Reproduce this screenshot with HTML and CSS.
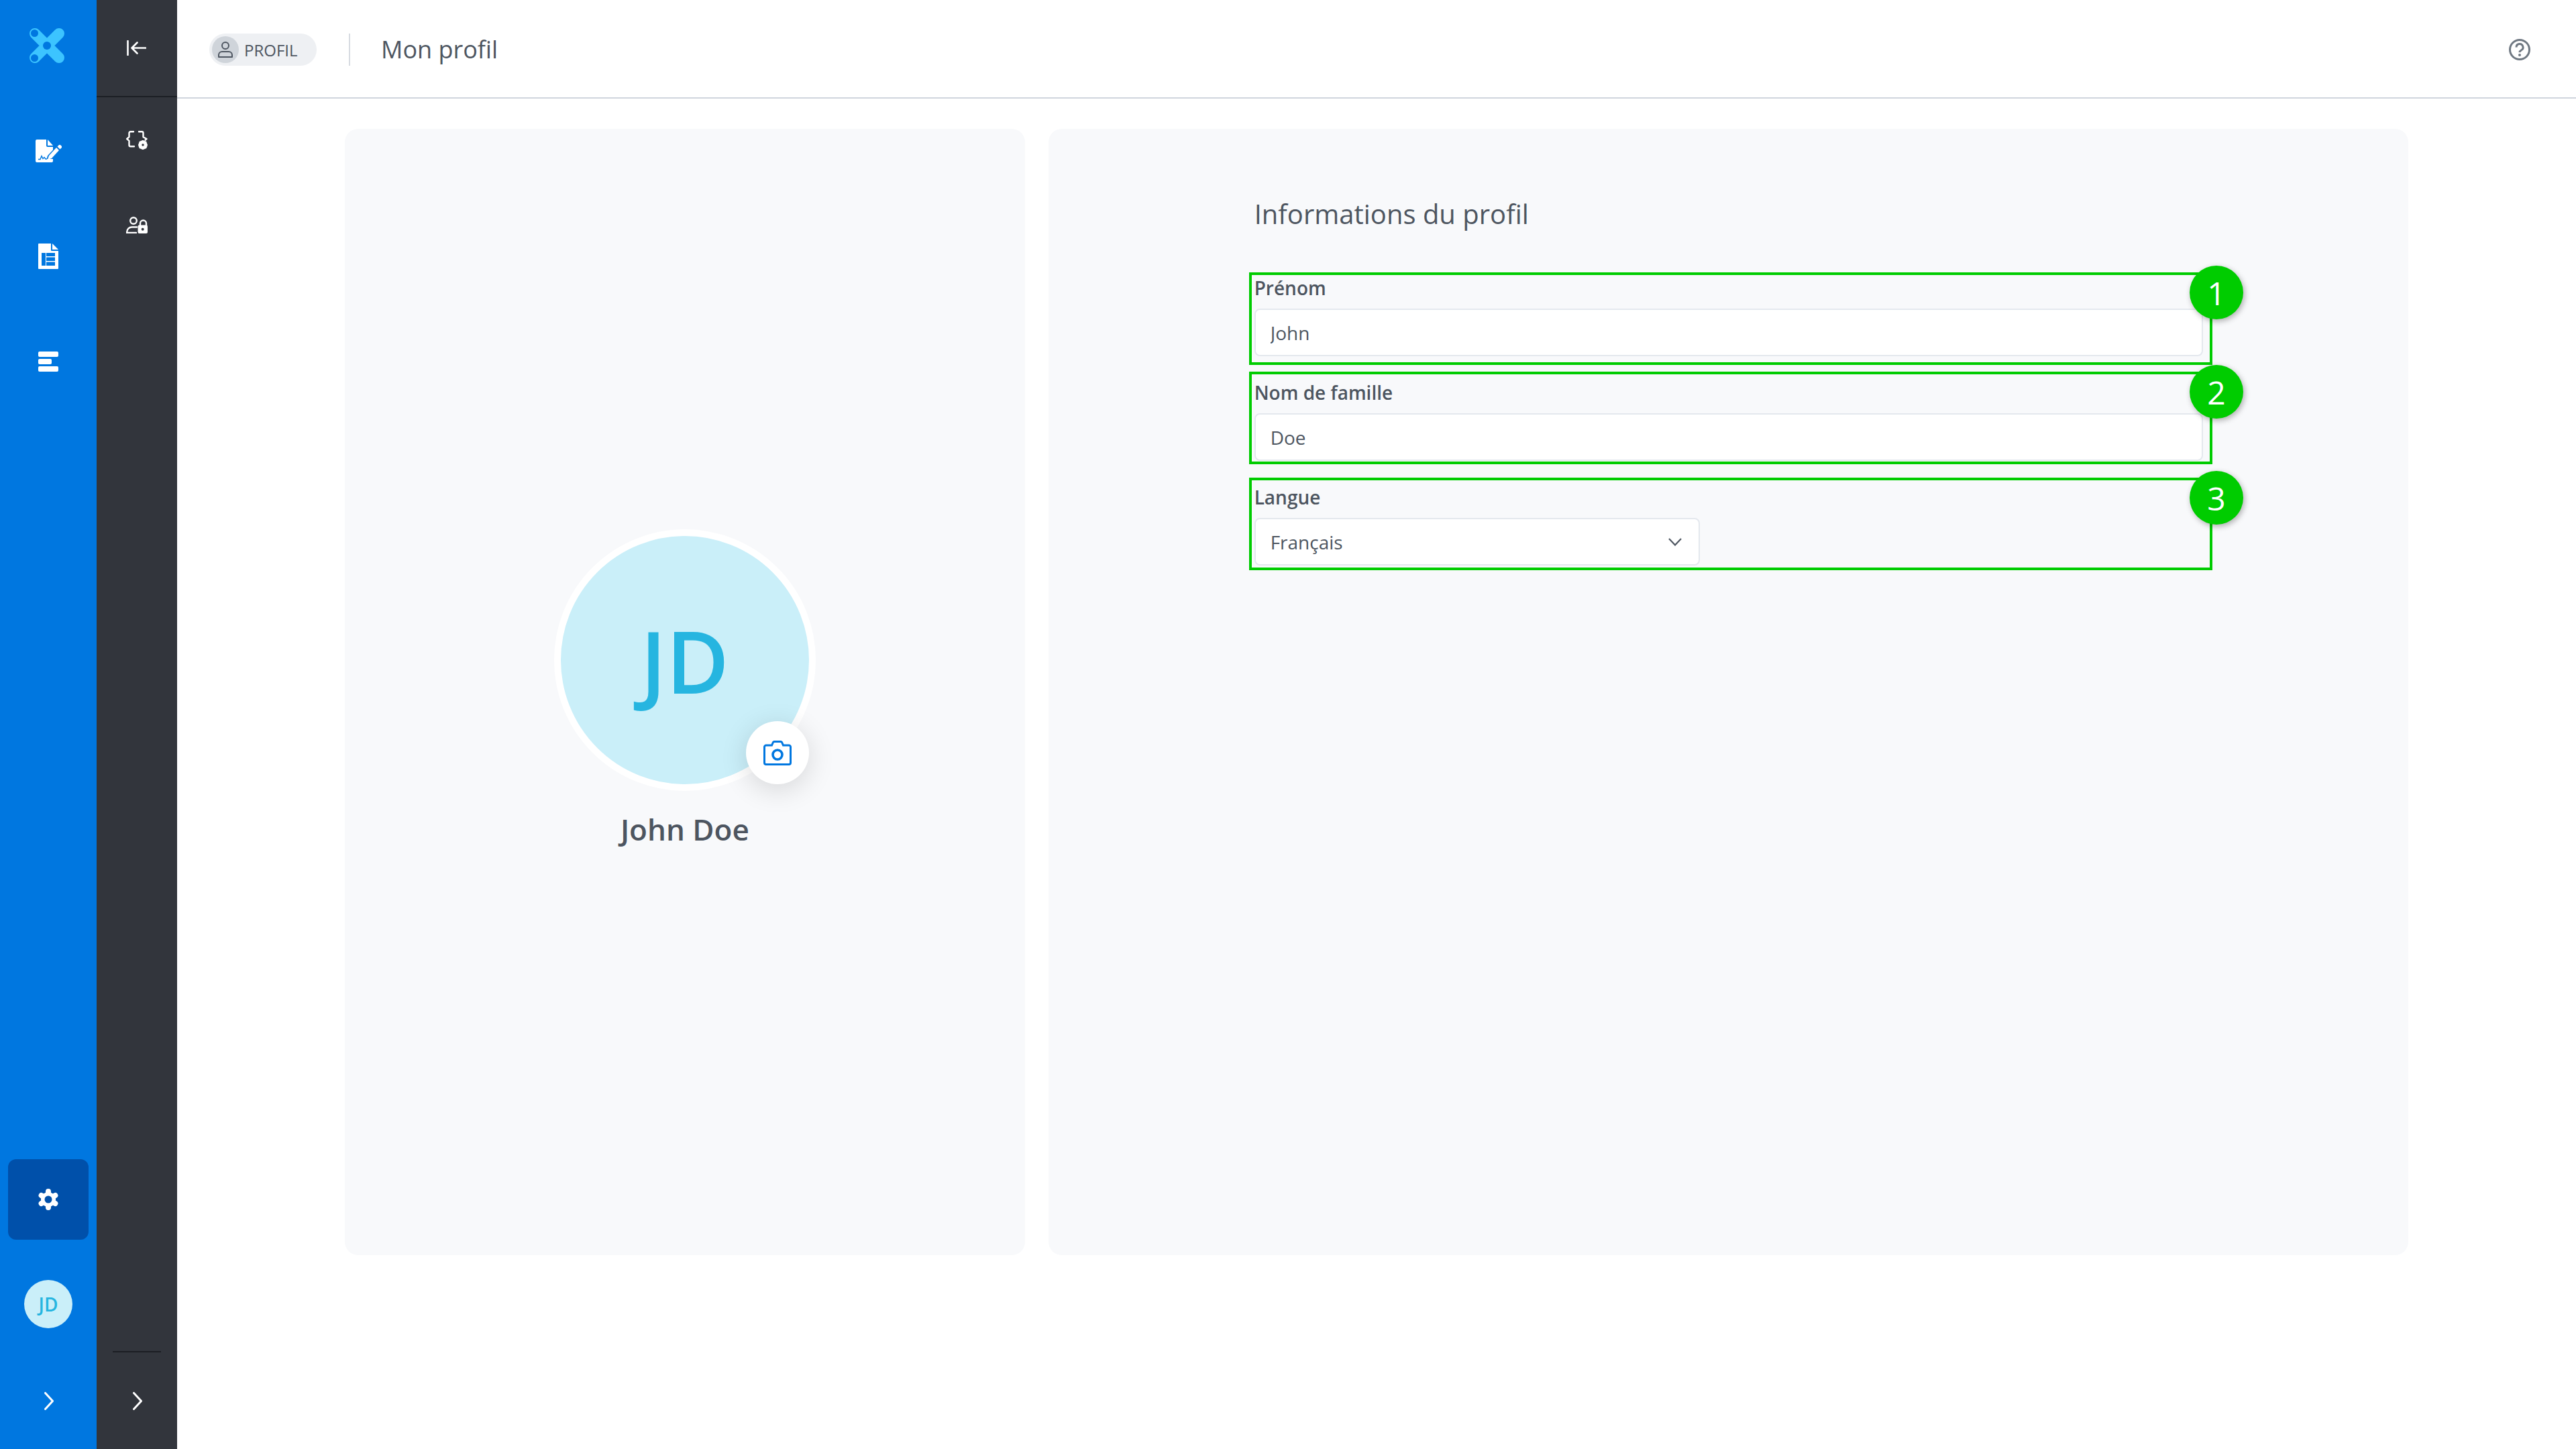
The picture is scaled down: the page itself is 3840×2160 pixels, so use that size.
FILE: index.html
```html
<!DOCTYPE html>
<html>
<head>
	<meta http-equiv="Content-Type" content="text/html;charset=UTF-8">
	<title>Mon profil</title>
	<link rel="stylesheet" href="styles.css">
</head>
<body>
	<div class="rail">
		<a class="tile" href="#">
			<svg class="logo" viewBox="0 0 52 52">
				<path d="M44 8 8 44M8 8l36 36" stroke="#3cc4ff" stroke-width="16" stroke-linecap="round" fill="none"/>
				<circle cx="7.5" cy="7.5" r="5.5" fill="#0077e0"/>
				<circle cx="7.5" cy="44.5" r="5.5" fill="#0077e0"/>
				<circle cx="26" cy="26" r="6" fill="#0077e0"/>
			</svg>
		</a>
		<a class="tile" href="#">
			<svg class="ico-sign" viewBox="0 0 39 34">
				<path d="M2 0h14v9a2 2 0 0 0 2 2h8v4.500L18 24l-1.500 5H26v3a2 2 0 0 1-2 2H2a2 2 0 0 1-2-2V2a2 2 0 0 1 2-2z" fill="#fff"/>
				<path d="M18 0l8 9h-8z" fill="#fff"/>
				<path d="M4 29.500h3l2-5 2 4 2-2 2 2.500h2" fill="none" stroke="#0077e0" stroke-width="1.400"/>
				<path d="M20 24 31 12l4 4-11 12-6 2z" fill="#fff"/>
				<path d="M32.500 10.500l2-2a2 2 0 0 1 3 0l1 1a2 2 0 0 1 0 3l-2 2z" fill="#fff"/>
			</svg>
		</a>
		<a class="tile" href="#">
			<svg class="ico-doc" viewBox="0 0 30 38">
				<path d="M1 0h18v10a1 1 0 0 0 1 1h10v26a1 1 0 0 1-1 1H1a1 1 0 0 1-1-1V1a1 1 0 0 1 1-1z" fill="#fff"/>
				<path d="M21 0l9 9h-9z" fill="#fff"/>
				<path d="M5 14h6v19H5zM12 14h13v5H12zM12 20.500h13v5.500H12zM12 27.500h13V33H12z" fill="#0077e0"/>
			</svg>
		</a>
		<a class="tile" href="#">
			<div class="bars">
				<i class="bar"></i>
				<i class="bar bar-short"></i>
				<i class="bar"></i>
			</div>
		</a>
		<div class="rail-bottom">
			<a class="tile tile-on" href="#">
				<svg class="ico-gear" viewBox="0 0 30 32">
					<path d="M15 16V4M15 16v12M15 16 4.600 10M15 16 25.400 10M15 16 4.600 22M15 16 25.400 22" stroke="#fff" stroke-width="8" stroke-linecap="round"/>
					<circle cx="15" cy="16" r="11" fill="#fff"/>
					<circle cx="15" cy="16" r="5.500" fill="#0050aa"/>
				</svg>
			</a>
			<a class="tile" href="#"><span class="avatar-small">JD</span></a>
			<a class="foot" href="#">
				<svg class="chev" viewBox="0 0 14 27"><path d="M1.500 1.500 12.500 13.500 1.500 25.500" fill="none" stroke="#fff" stroke-width="3" stroke-linecap="round" stroke-linejoin="round"/></svg>
			</a>
		</div>
	</div>

	<div class="sub">
		<a class="sub-top" href="#">
			<svg class="ico-back" viewBox="0 0 29 23">
				<path d="M1.500 1v21M28 11.500H8M15.500 3.500 7.500 11.500l8 8" fill="none" stroke="#fff" stroke-width="2.600" stroke-linecap="round" stroke-linejoin="round"/>
			</svg>
		</a>
		<a class="sub-item sub-first" href="#">
			<svg class="ico-sub" viewBox="0 0 32 28">
				<path d="M11 1.200H6.500a2 2 0 0 0-2 2v6L1.200 12l3.300 2.800v6.500a2 2 0 0 0 2 2H12M19 1.200h4.500a2 2 0 0 1 2 2v6L30.500 12l-2 1.800" fill="none" stroke="#fff" stroke-width="2.400" stroke-linecap="round" stroke-linejoin="round"/>
				<circle cx="25" cy="21" r="4.800" fill="none" stroke="#fff" stroke-width="4"/>
				<path d="M25 14v14M18.500 21h13M20 16l10 10M30 16 20 26" stroke="#fff" stroke-width="2.200"/>
				<circle cx="25" cy="21" r="1.700" fill="#32353c"/>
			</svg>
		</a>
		<a class="sub-item" href="#">
			<svg class="ico-sub ico-lock" viewBox="0 0 32 25">
				<circle cx="11" cy="6" r="4.800" fill="none" stroke="#fff" stroke-width="2.400"/>
				<path d="M16 15.500H9a7.500 7.500 0 0 0-7.800 7.200V24H15" fill="none" stroke="#fff" stroke-width="2.400" stroke-linecap="round"/>
				<path d="M21 13V10a4.500 4.500 0 0 1 9 0v3" fill="none" stroke="#fff" stroke-width="2.400"/>
				<rect x="17.500" y="12.500" width="14.500" height="12.500" rx="2" fill="#fff"/>
				<circle cx="24.700" cy="18.700" r="2" fill="#32353c"/>
			</svg>
		</a>
		<div class="sub-bottom">
			<a class="foot" href="#">
				<svg class="chev" viewBox="0 0 14 27"><path d="M1.500 1.500 12.500 13.500 1.500 25.500" fill="none" stroke="#fff" stroke-width="3" stroke-linecap="round" stroke-linejoin="round"/></svg>
			</a>
		</div>
	</div>

	<div class="main">
		<div class="head">
			<div class="pill">
				<span class="pill-ico">
					<svg viewBox="0 0 24 26" class="ico-person">
						<circle cx="12" cy="7" r="5" fill="none" stroke="#4d5560" stroke-width="2"/>
						<path d="M2 24v-3a5 5 0 0 1 5-5h10a5 5 0 0 1 5 5v3z" fill="none" stroke="#4d5560" stroke-width="2" stroke-linejoin="round"/>
					</svg>
				</span>
				<span class="pill-text">PROFIL</span>
			</div>
			<h1 class="page-title">Mon profil</h1>
			<svg class="ico-help" viewBox="0 0 32 32">
				<circle cx="16" cy="16" r="14.500" fill="none" stroke="#6f7882" stroke-width="3"/>
				<path d="M11 12.500a5 5 0 1 1 7.500 4.300c-1.700 1-2.500 1.700-2.500 3.200" fill="none" stroke="#6f7882" stroke-width="3"/>
				<circle cx="16" cy="24" r="2" fill="#6f7882"/>
			</svg>
		</div>

		<div class="cards">
			<div class="card card-left">
				<div class="avatar">
					JD
					<a class="cam" href="#">
						<svg class="ico-cam" viewBox="0 0 42 37">
							<path d="M4 7h8.500l2-4.500a2 2 0 0 1 1.800-1h9.400a2 2 0 0 1 1.800 1l2 4.500H38a2.500 2.500 0 0 1 2.500 2.500V33a2.500 2.500 0 0 1-2.500 2.500H4A2.500 2.500 0 0 1 1.500 33V9.500A2.500 2.500 0 0 1 4 7z" fill="none" stroke="#0077e0" stroke-width="3"/>
							<circle cx="21" cy="21" r="7" fill="none" stroke="#0077e0" stroke-width="3.600"/>
						</svg>
					</a>
				</div>
				<div class="user-name">John Doe</div>
			</div>

			<div class="card card-right">
				<h2 class="form-title">Informations du profil</h2>
				<div class="form">
					<div class="field">
						<label class="field-label">Prénom</label>
						<input class="input" type="text" value="John">
					</div>
					<div class="field">
						<label class="field-label">Nom de famille</label>
						<input class="input" type="text" value="Doe">
					</div>
					<div class="field">
						<label class="field-label">Langue</label>
						<div class="select">
							<span>Français</span>
							<svg class="ico-down" viewBox="0 0 20 12"><path d="M1 1l9 9.500L19 1" fill="none" stroke="#4d5560" stroke-width="2.200"/></svg>
						</div>
					</div>

					<!-- annotations par dessus le formulaire -->
					<div class="mark mark-1"><span class="num">1</span></div>
					<div class="mark mark-2"><span class="num">2</span></div>
					<div class="mark mark-3"><span class="num">3</span></div>
				</div>
			</div>
		</div>
	</div>
</body>
</html>
```

FILE: styles.css
```css
*{
	margin: 0;
	padding: 0;
	box-sizing: border-box;
}
html,body{
	height: 100%;
}
body{
	display: flex;
	height: 2160px;
	overflow: hidden;
	background-color: #fff;
	font-family: "Open Sans", "Liberation Sans", sans-serif;
	color: #4d5560;
}
a{
	text-decoration: none;
}

/* rail bleu */
.rail{
	width: 144px;
	flex-shrink: 0;
	display: flex;
	flex-direction: column;
	align-items: center;
	gap: 37px;
	padding-top: 8px;
	background-color: #0077e0;
}
.tile{
	width: 120px;
	height: 120px;
	display: flex;
	align-items: center;
	justify-content: center;
	border-radius: 12px;
}
.tile-on{
	background-color: #0050aa;
}
.logo{
	width: 52px;
	height: 52px;
	margin-right: 4px;
}
.ico-sign{
	width: 39px;
	height: 34px;
}
.ico-doc{
	width: 30px;
	height: 38px;
}
.bars{
	width: 30px;
	display: flex;
	flex-direction: column;
	gap: 3px;
}
.bar{
	display: block;
	height: 8px;
	border-radius: 2px;
	background-color: #fff;
}
.bar-short{
	width: 20px;
}
.rail-bottom{
	margin-top: auto;
	display: flex;
	flex-direction: column;
	align-items: center;
}
.rail-bottom .tile-on{
	margin-bottom: 36px;
}
.ico-gear{
	width: 30px;
	height: 32px;
}
.avatar-small{
	width: 72px;
	height: 72px;
	display: flex;
	align-items: center;
	justify-content: center;
	border-radius: 50%;
	background-color: #caeff9;
	color: #26b5e0;
	font-size: 28px;
	font-weight: 600;
}
.foot{
	width: 120px;
	height: 144px;
	margin-top: 12px;
	display: flex;
	align-items: center;
	justify-content: center;
}
.chev{
	width: 14px;
	height: 27px;
	margin-left: 2px;
}

/* colonne sombre */
.sub{
	width: 120px;
	flex-shrink: 0;
	display: flex;
	flex-direction: column;
	align-items: center;
	background-color: #32353c;
}
.sub-top{
	width: 100%;
	height: 145px;
	display: flex;
	align-items: center;
	justify-content: center;
	border-bottom: 2px solid #1c1e24;
}
.ico-back{
	width: 29px;
	height: 23px;
	margin-right: 2px;
}
.sub-item{
	width: 100%;
	height: 126px;
	display: flex;
	align-items: center;
	justify-content: center;
}
.sub-first{
	margin-top: 1px;
}
.ico-sub{
	width: 32px;
	height: 28px;
}
.ico-lock{
	height: 25px;
}
.sub-bottom{
	margin-top: auto;
	width: 72px;
	border-top: 2px solid #1c1e24;
	display: flex;
	justify-content: center;
}
.sub-bottom .foot{
	margin-top: 0;
}

/* contenu */
.main{
	flex: 1;
	min-width: 0;
}
.head{
	height: 147px;
	display: flex;
	align-items: center;
	padding: 3px 68px 0 48px;
	border-bottom: 2px solid #d0d5dd;
}
.pill{
	width: 160px;
	height: 48px;
	display: flex;
	align-items: center;
	gap: 8px;
	padding-left: 4px;
	border-radius: 24px;
	background-color: #eef0f3;
}
.pill-ico{
	width: 40px;
	height: 40px;
	display: flex;
	align-items: center;
	justify-content: center;
	border-radius: 50%;
	background-color: #cfd4da;
}
.ico-person{
	width: 24px;
	height: 26px;
}
.pill-text{
	font-size: 24px;
	font-weight: 400;
	color: #4d5560;
}
.page-title{
	margin-left: 48px;
	padding-left: 46px;
	height: 48px;
	line-height: 48px;
	border-left: 2px solid #d8dce2;
	font-size: 36px;
	font-weight: 400;
	color: #4d5560;
}
.ico-help{
	width: 32px;
	height: 32px;
	margin-left: auto;
}
.cards{
	display: grid;
	grid-template-columns: 1fr 2fr;
	gap: 35px;
	padding: 45px 250px 0;
}
.card{
	height: 1679px;
	border-radius: 20px;
	background-color: #f8f9fb;
}
.card-left{
	display: flex;
	flex-direction: column;
	align-items: center;
	padding-top: 597px;
}
.avatar{
	position: relative;
	width: 390px;
	height: 390px;
	display: flex;
	align-items: center;
	justify-content: center;
	border: 10px solid #fff;
	border-radius: 50%;
	background-color: #caeff9;
	color: #26b5e0;
	font-size: 128px;
	font-weight: 600;
}
.cam{
	position: absolute;
	right: 0;
	bottom: 0;
	width: 94px;
	height: 94px;
	display: flex;
	align-items: center;
	justify-content: center;
	border-radius: 50%;
	background-color: #fff;
	box-shadow: 0 8px 40px rgba(0,0,0,.14);
}
.ico-cam{
	width: 42px;
	height: 37px;
}
.user-name{
	margin-top: 27px;
	font-size: 44px;
	line-height: 60px;
	font-weight: 600;
	color: #4d5560;
}
.card-right{
	padding: 99px 306px 0 307px;
}
.form-title{
	font-size: 40px;
	line-height: 56px;
	font-weight: 400;
	color: #4d5560;
	margin-bottom: 62px;
}
.form{
	position: relative;
	display: flex;
	flex-direction: column;
	gap: 34px;
}
.field{
	display: flex;
	flex-direction: column;
	gap: 11px;
}
.field-label{
	font-size: 28px;
	line-height: 40px;
	font-weight: 600;
	color: #4d5560;
}
.input,.select{
	height: 71px;
	padding: 0 22px;
	border: 2px solid #e4e8ee;
	border-radius: 8px;
	background-color: #fff;
	font-family: inherit;
	font-size: 28px;
	color: #4d5560;
	outline: none;
}
.input{
	width: 100%;
}
.select{
	width: 664px;
	display: flex;
	align-items: center;
	justify-content: space-between;
}
.ico-down{
	width: 20px;
	height: 12px;
	margin-right: 3px;
}

/* reperes verts */
.mark{
	position: absolute;
	left: -8px;
	right: -14px;
	height: 138px;
	border: 4px solid #00cc00;
}
.mark-1{
	top: -3px;
}
.mark-2{
	top: 145px;
}
.mark-3{
	top: 303px;
}
.num{
	position: absolute;
	top: -14px;
	right: -50px;
	width: 80px;
	height: 80px;
	display: flex;
	align-items: center;
	justify-content: center;
	border-radius: 50%;
	background-color: #00cc00;
	box-shadow: 2px 3px 8px rgba(0,0,0,.3);
	color: #fff;
	font-size: 48px;
}
```
